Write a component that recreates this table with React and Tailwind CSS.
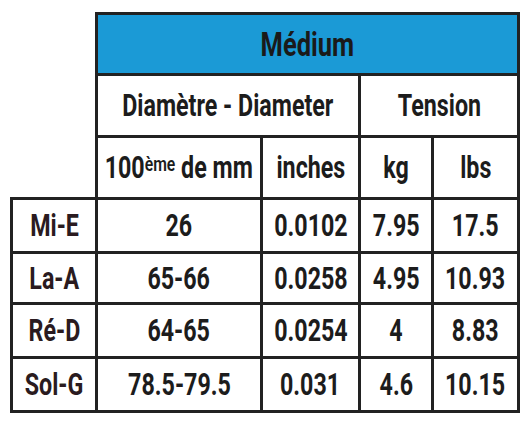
import React from 'react';

const rows = [
    { note: "Mi-E", mm: "26", inches: "0.0102", kg: "7.95", lbs: "17.5" },
    { note: "La-A", mm: "65-66", inches: "0.0258", kg: "4.95", lbs: "10.93" },
    { note: "Ré-D", mm: "64-65", inches: "0.0254", kg: "4", lbs: "8.83" },
    { note: "Sol-G", mm: "78.5-79.5", inches: "0.031", kg: "4.6", lbs: "10.15" },
];

// condensed look: Roboto bold squeezed horizontally, centred even when the unscaled text overflows
function T({ children }) {
    return (
        <div className="flex justify-center">
            <span className="shrink-0 inline-block scale-x-[0.75] whitespace-nowrap">{children}</span>
        </div>
    );
}

const cell = "border-[3px] border-[#222] text-center align-middle p-0";

function App() {
    return (
        <div className="w-[528px] h-[421px] bg-white pt-[12px] pl-[10px] font-['Roboto','Liberation_Sans',sans-serif] font-bold text-[#1c1c1c]">
            <table className="border-collapse table-fixed w-[507px]">
                <colgroup>
                    <col className="w-[85px]" />
                    <col className="w-[165px]" />
                    <col className="w-[98px]" />
                    <col className="w-[73px]" />
                    <col className="w-[86px]" />
                </colgroup>
                <tbody>
                    <tr className="h-[61px]">
                        <td rowSpan={3} className="border-0"></td>
                        <td colSpan={4} className={`${cell} bg-[#1b9ad6] text-[34px] leading-none text-[#1a1a1a]`}>
                            <T>Médium</T>
                        </td>
                    </tr>
                    <tr className="h-[62px]">
                        <td colSpan={2} className={`${cell} text-[31px] leading-none`}>
                            <T>Diamètre - Diameter</T>
                        </td>
                        <td colSpan={2} className={`${cell} text-[31px] leading-none`}>
                            <T>Tension</T>
                        </td>
                    </tr>
                    <tr className="h-[62px] text-[31px] leading-none">
                        <td className={cell}>
                            <T>100<sup className="text-[21px] relative -top-[7px] font-semibold">ème</sup> de mm</T>
                        </td>
                        <td className={cell}><T>inches</T></td>
                        <td className={cell}><T>kg</T></td>
                        <td className={cell}><T>lbs</T></td>
                    </tr>
                    {rows.map((r, i) => (
                        <tr key={r.note} className={`${i === 1 ? 'h-[51px]' : 'h-[54px]'} text-[31px] leading-none`}>
                            <td className={`${cell} text-[#2a1b20]`}><T>{r.note}</T></td>
                            <td className={cell}><T>{r.mm}</T></td>
                            <td className={cell}><T>{r.inches}</T></td>
                            <td className={cell}><T>{r.kg}</T></td>
                            <td className={cell}><T>{r.lbs}</T></td>
                        </tr>
                    ))}
                </tbody>
            </table>
        </div>
    );
}

export default App;
